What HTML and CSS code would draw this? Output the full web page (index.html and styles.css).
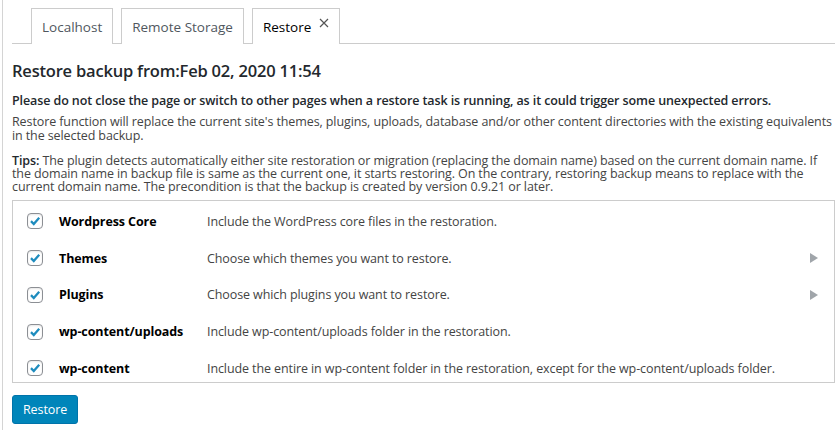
FILE: index.html
```html
<!DOCTYPE html>
<html lang="en">
<head>
<meta charset="utf-8">
<title>Restore</title>
<link rel="stylesheet" href="styles.css">
</head>
<body>
<div class="page">
  <div class="tabs">
    <div class="tab">Localhost</div>
    <div class="tab">Remote Storage</div>
    <div class="tab active">Restore <span class="close"><svg viewBox="0 0 10 10" width="10" height="10"><path d="M1 1 L9 9 M9 1 L1 9" stroke="#555" stroke-width="1.2" fill="none"/></svg></span></div>
  </div>
  <h2 class="title">Restore backup from:Feb 02, 2020 11:54</h2>
  <p class="warn">Please do not close the page or switch to other pages when a restore task is running, as it could trigger some unexpected errors.</p>
  <p class="desc">Restore function will replace the current site's themes, plugins, uploads, database and/or other content directories with the existing equivalents in the selected backup.</p>
  <p class="desc tips"><strong>Tips:</strong> The plugin detects automatically either site restoration or migration (replacing the domain name) based on the current domain name. If the domain name in backup file is same as the current one, it starts restoring. On the contrary, restoring backup means to replace with the current domain name. The precondition is that the backup is created by version 0.9.21 or later.</p>
  <div class="box">
    <div class="row">
      <span class="cb"><svg viewBox="0 0 16 16" width="16" height="16"><path d="M3.4 8.2 L6.6 11.4 L12.8 4.4" fill="none" stroke="#1e8cbe" stroke-width="2.6"/></svg></span>
      <span class="name">Wordpress Core</span>
      <span class="info">Include the WordPress core files in the restoration.</span>
    </div>
    <div class="row">
      <span class="cb"><svg viewBox="0 0 16 16" width="16" height="16"><path d="M3.4 8.2 L6.6 11.4 L12.8 4.4" fill="none" stroke="#1e8cbe" stroke-width="2.6"/></svg></span>
      <span class="name">Themes</span>
      <span class="info">Choose which themes you want to restore.</span>
      <span class="arrow"></span>
    </div>
    <div class="row">
      <span class="cb"><svg viewBox="0 0 16 16" width="16" height="16"><path d="M3.4 8.2 L6.6 11.4 L12.8 4.4" fill="none" stroke="#1e8cbe" stroke-width="2.6"/></svg></span>
      <span class="name">Plugins</span>
      <span class="info">Choose which plugins you want to restore.</span>
      <span class="arrow"></span>
    </div>
    <div class="row">
      <span class="cb"><svg viewBox="0 0 16 16" width="16" height="16"><path d="M3.4 8.2 L6.6 11.4 L12.8 4.4" fill="none" stroke="#1e8cbe" stroke-width="2.6"/></svg></span>
      <span class="name">wp-content/uploads</span>
      <span class="info">Include wp-content/uploads folder in the restoration.</span>
    </div>
    <div class="row">
      <span class="cb"><svg viewBox="0 0 16 16" width="16" height="16"><path d="M3.4 8.2 L6.6 11.4 L12.8 4.4" fill="none" stroke="#1e8cbe" stroke-width="2.6"/></svg></span>
      <span class="name">wp-content</span>
      <span class="info">Include the entire in wp-content folder in the restoration, except for the wp-content/uploads folder.</span>
    </div>
  </div>
  <button class="btn">Restore</button>
</div>
</body>
</html>
```
FILE: styles.css
```css
html, body {
  margin: 0;
  padding: 0;
  background: #fff;
}
body {
  font-family: "Open Sans", "Noto Sans", sans-serif;
  color: #23282d;
  font-size: 12.5px;
  letter-spacing: -0.1px;
}
.page {
  margin-left: 2px;
  border-left: 1px solid #d4d4d4;
  padding: 8px 4px 0 9px;
  min-height: 422px;
}
.tabs {
  display: flex;
  gap: 8px;
  padding-left: 19px;
  border-bottom: 1px solid #ccc;
  height: 35px;
}
.tab {
  box-sizing: border-box;
  height: 36px;
  border: 1px solid #ccc;
  border-bottom: none;
  padding: 0 10px;
  display: flex;
  align-items: center;
  font-size: 13.5px;
  letter-spacing: 0;
  color: #50575e;
  background: #fff;
}
.tab.active {
  color: #000;
  position: relative;
  z-index: 1;
}
.close {
  margin-left: 8px;
  display: block;
  position: relative;
  top: -4px;
}
.close svg {
  display: block;
}
.title {
  margin: 15px 0 0;
  font-size: 16.5px;
  letter-spacing: -0.2px;
  line-height: 24px;
  font-weight: 600;
}
.warn {
  margin: 10px 0 0;
  font-weight: 600;
  line-height: 16px;
}
.desc {
  margin: 6px 0 0;
  line-height: 14px;
  color: #444;
}
.tips {
  margin-top: 11px;
  line-height: 13px;
}
.tips strong {
  display: inline-block;
  line-height: 13px;
  height: 13px;
  font-weight: 600;
  color: #23282d;
}
.box {
  margin-top: 7px;
  border: 1px solid #ccc;
  padding-top: 2px;
  box-sizing: border-box;
  height: 183px;
}
.row {
  display: flex;
  align-items: center;
  height: 36.75px;
  padding-left: 14px;
}
.row:last-child {
  margin-bottom: -5px;
}
.cb {
  box-sizing: border-box;
  width: 16px;
  height: 16px;
  border: 1px solid #8c8f94;
  border-radius: 4px;
  box-shadow: inset 0 1px 2px rgba(0,0,0,.1);
  display: flex;
  align-items: center;
  justify-content: center;
  flex: none;
}
.cb svg {
  display: block;
  width: 14px;
  height: 14px;
}
.name {
  margin-left: 16px;
  width: 148px;
  flex: none;
  font-weight: 700;
  color: #000;
}
.info {
  flex: 1;
  color: #444;
}
.arrow {
  width: 0;
  height: 0;
  border-left: 8px solid #a0a5aa;
  border-top: 5px solid transparent;
  border-bottom: 5px solid transparent;
  margin-right: 16px;
}
.btn {
  margin-top: 12px;
  height: 29px;
  padding: 0 10px;
  background: #0085ba;
  border: 1px solid #0073aa;
  border-radius: 3px;
  color: #fff;
  font-family: inherit;
  font-size: 12.5px;
  letter-spacing: -0.1px;
  cursor: pointer;
}
```
